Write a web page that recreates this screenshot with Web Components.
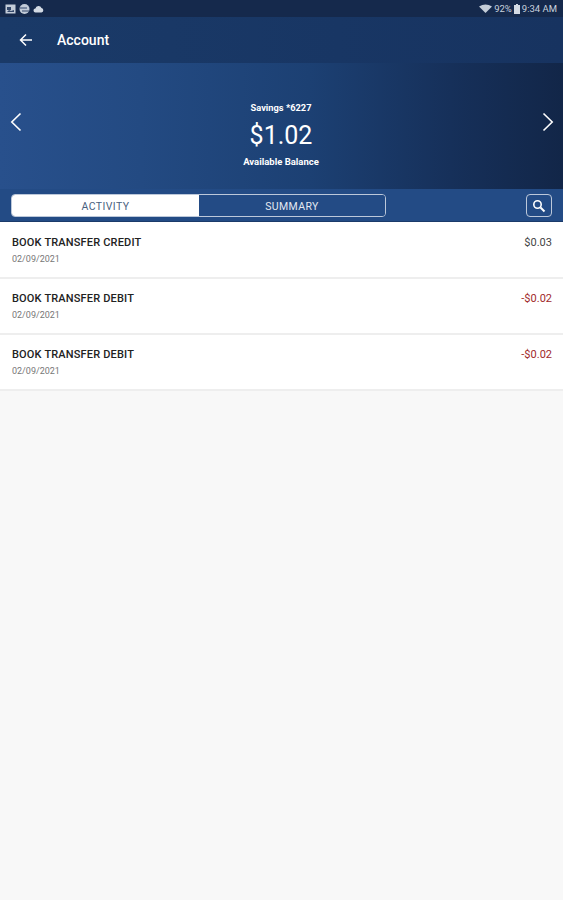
<!DOCTYPE html>
<html>
<head>
<meta charset="utf-8">
<title>Account</title>
<style>
  html, body { margin: 0; height: 100%; }
  body { background: #f8f8f8; font-family: Roboto, "Liberation Sans", sans-serif; }
</style>
</head>
<body>
<account-screen>
  <status-bar></status-bar>
  <app-header titulo="Account"></app-header>
  <balance-panel cuenta="Savings *6227" saldo="$1.02" nota="Available Balance"></balance-panel>
  <tab-bar></tab-bar>
  <tx-row nombre="BOOK TRANSFER CREDIT" fecha="02/09/2021" monto="$0.03"></tx-row>
  <tx-row nombre="BOOK TRANSFER DEBIT" fecha="02/09/2021" monto="-$0.02" negativo></tx-row>
  <tx-row nombre="BOOK TRANSFER DEBIT" fecha="02/09/2021" monto="-$0.02" negativo></tx-row>
</account-screen>

<script>
class AccountScreen extends HTMLElement {
  constructor() {
    super();
    this.attachShadow({ mode: 'open' });
    this.shadowRoot.innerHTML = `
      <style>
        :host { display: flex; flex-direction: column; min-height: 900px; background: #f8f8f8; }
      </style>
      <slot></slot>
    `;
  }
}

class StatusBar extends HTMLElement {
  constructor() {
    super();
    this.attachShadow({ mode: 'open' });
    this.shadowRoot.innerHTML = `
      <style>
        :host {
          display: flex; align-items: center; justify-content: space-between;
          height: 17px; padding: 0 6px 0 5px; box-sizing: border-box;
          background: #15294c; color: #c9d2df; font-size: 9.5px;
        }
        .izq, .der { display: flex; align-items: center; }
        .izq { gap: 3px; }
        .der { gap: 2px; }
        svg { display: block; }
      </style>
      <div class="izq">
        <svg width="11" height="10" viewBox="0 0 11 10"><rect x="0.5" y="0.5" width="10" height="9" fill="#c3ccd8"/><path d="M2 3h4v3H2z" fill="#33476a"/><path d="M2 8l2-2 2 1 3-1v2z" fill="#33476a"/></svg>
        <svg width="11" height="10" viewBox="0 0 11 10"><circle cx="5.5" cy="5" r="5" fill="#c3ccd8"/><path d="M1 4h7M3 7h7" stroke="#33476a" stroke-width="1"/></svg>
        <svg width="11" height="8" viewBox="0 0 11 8"><path d="M2.6 7.500a2 2 0 0 1-.2-4A3.200 3.200 0 0 1 8.500 3a2.300 2.300 0 0 1 0 4.500z" fill="#d3dae4"/></svg>
      </div>
      <div class="der">
        <svg width="13" height="9" viewBox="0 0 13 9"><path d="M0 2.500Q6.500-1.500 13 2.500L6.500 9z" fill="#c3ccd8"/></svg>
        <span>92%</span>
        <svg width="6" height="10" viewBox="0 0 6 10"><path d="M2 0h2v1h2v9H0V1h2z" fill="#d3dae4"/></svg>
        <span>9:34 AM</span>
      </div>
    `;
  }
}

class AppHeader extends HTMLElement {
  constructor() {
    super();
    this.attachShadow({ mode: 'open' });
    this.shadowRoot.innerHTML = `
      <style>
        :host {
          display: flex; align-items: center; gap: 24px;
          height: 46px; padding: 0 0 0 19px; box-sizing: border-box;
          background: linear-gradient(90deg, #1a3a68, #183664 60%, #173360);
          color: #fff; font-size: 14px; font-weight: 500;
        }
        svg { display: block; }
      </style>
      <svg width="14" height="14" viewBox="0 0 14 14" fill="none" stroke="#fff" stroke-width="1.500">
        <path d="M13 7H1.800M7 1.500L1.500 7 7 12.500"/>
      </svg>
      <span id="titulo"></span>
    `;
  }

  connectedCallback() {
    this.shadowRoot.querySelector('#titulo').textContent = this.getAttribute('titulo');
  }
}

class BalancePanel extends HTMLElement {
  constructor() {
    super();
    this.attachShadow({ mode: 'open' });
    this.shadowRoot.innerHTML = `
      <style>
        :host {
          display: flex; align-items: center; justify-content: space-between;
          height: 126px; padding: 0 9px 8px 10px; box-sizing: border-box;
          background: linear-gradient(90deg, #28508c 0%, #234a82 25%, #1c4073 55%, #16305a 80%, #122648 100%);
          color: #fff;
        }
        .centro { display: flex; flex-direction: column; align-items: center; margin-top: 24px; margin-left: -2px; }
        .cuenta { font-size: 9.3px; font-weight: 700; line-height: 11px; }
        .nota { font-size: 9.5px; font-weight: 700; line-height: 11px; }
        .saldo { font-size: 25px; line-height: 30px; margin: 8px 0 5px; }
        svg { display: block; }
      </style>
      <svg width="12" height="20" viewBox="0 0 12 20" fill="none" stroke="#fff" stroke-width="1.600"><path d="M10.500 1.500L1.800 10l8.700 8.500"/></svg>
      <div class="centro">
        <span class="cuenta" id="cuenta"></span>
        <span class="saldo" id="saldo"></span>
        <span class="nota" id="nota"></span>
      </div>
      <svg width="12" height="20" viewBox="0 0 12 20" fill="none" stroke="#fff" stroke-width="1.600"><path d="M1.500 1.500L10.200 10l-8.700 8.500"/></svg>
    `;
  }

  connectedCallback() {
    for (const campo of ['cuenta', 'saldo', 'nota']) {
      this.shadowRoot.querySelector('#' + campo).textContent = this.getAttribute(campo);
    }
  }
}

class TabBar extends HTMLElement {
  constructor() {
    super();
    this.attachShadow({ mode: 'open' });
    this.shadowRoot.innerHTML = `
      <style>
        :host {
          display: flex; align-items: center; justify-content: space-between;
          height: 33px; padding: 1px 11px 0; box-sizing: border-box;
          background: #234b85; border-bottom: 1px solid #1b3a6a;
        }
        .tabs {
          display: flex; width: 375px; height: 23px; box-sizing: border-box;
          border: 1.500px solid #bcc8da; border-radius: 4px; overflow: hidden;
        }
        .tab {
          display: flex; align-items: center; justify-content: center; padding-top: 1px;
          font-size: 10.500px; letter-spacing: 0.4px; color: #fff;
        }
        .activa { width: 187px; background: #fff; color: #4a5f80; }
        .otra { flex: 1; background: #234b85; color: #e4e9f1; }
        .buscar {
          display: flex; align-items: center; justify-content: center;
          width: 26px; height: 23px; box-sizing: border-box;
          border: 1.500px solid #bcc8da; border-radius: 4px;
        }
        svg { display: block; }
      </style>
      <div class="tabs">
        <div class="tab activa">ACTIVITY</div>
        <div class="tab otra">SUMMARY</div>
      </div>
      <div class="buscar">
        <svg width="14" height="14" viewBox="0 0 14 14" fill="none" stroke="#fff">
          <circle cx="5.500" cy="5.500" r="3.700" stroke-width="1.600"/>
          <path d="M8.500 8.500L12.500 12.500" stroke-width="2"/>
        </svg>
      </div>
    `;
  }
}

class TxRow extends HTMLElement {
  constructor() {
    super();
    this.attachShadow({ mode: 'open' });
    this.shadowRoot.innerHTML = `
      <style>
        :host {
          display: flex; justify-content: space-between;
          height: 56px; padding: 13px 11px 0 12px; box-sizing: border-box;
          background: #fff; border-bottom: 2px solid #eeeeee;
        }
        :host(:first-of-type) { height: 57px; padding-top: 14px; }
        .nombre { font-size: 11px; font-weight: 500; line-height: 13px; color: #222; letter-spacing: 0.17px; }
        .fecha { font-size: 9px; line-height: 11px; margin-top: 5px; color: #777; }
        .monto { font-size: 11px; line-height: 13px; color: #444; }
        :host([negativo]) .monto { color: #a12a2a; }
      </style>
      <div>
        <div class="nombre" id="nombre"></div>
        <div class="fecha" id="fecha"></div>
      </div>
      <div class="monto" id="monto"></div>
    `;
  }

  connectedCallback() {
    for (const campo of ['nombre', 'fecha', 'monto']) {
      this.shadowRoot.querySelector('#' + campo).textContent = this.getAttribute(campo);
    }
  }
}

customElements.define('account-screen', AccountScreen);
customElements.define('status-bar', StatusBar);
customElements.define('app-header', AppHeader);
customElements.define('balance-panel', BalancePanel);
customElements.define('tab-bar', TabBar);
customElements.define('tx-row', TxRow);
</script>
</body>
</html>
